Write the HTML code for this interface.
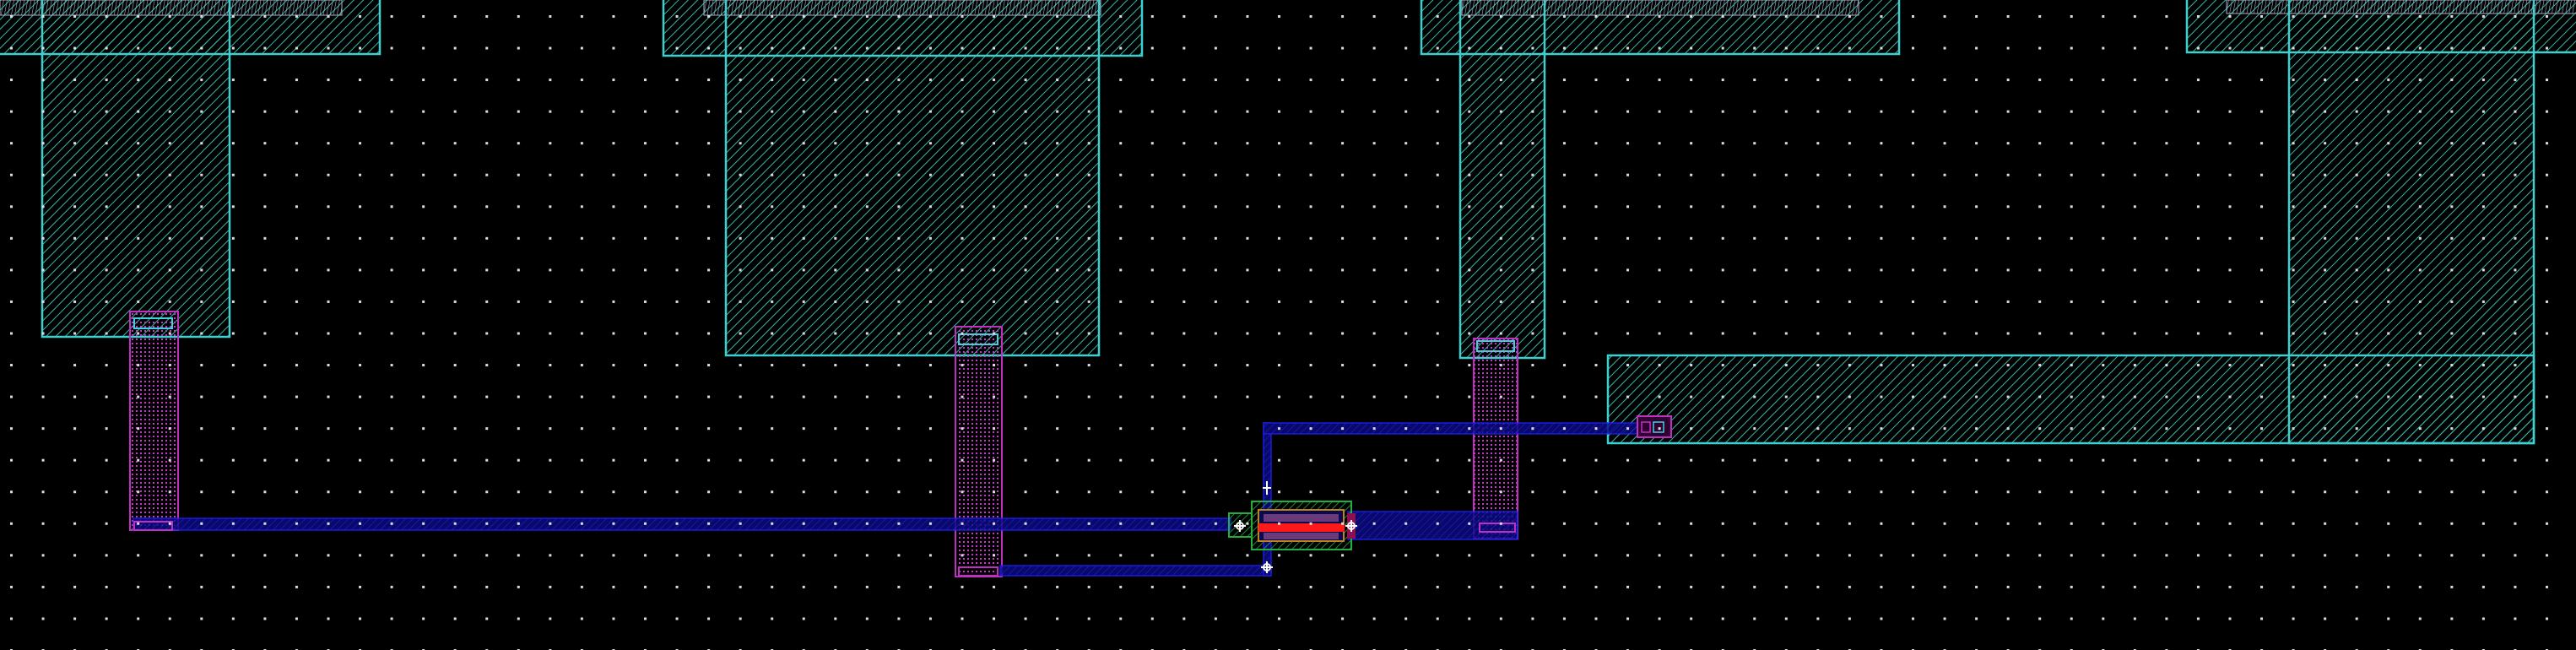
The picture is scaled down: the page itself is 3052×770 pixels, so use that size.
<!DOCTYPE html>
<html><head><style>html,body{margin:0;padding:0;background:#000;overflow:hidden}svg{display:block}</style></head>
<body>
<svg width="3052" height="770" viewBox="0 0 3052 770" xmlns="http://www.w3.org/2000/svg">
<defs>
<pattern id="dots" x="11" y="17" width="37.55" height="37.55" patternUnits="userSpaceOnUse">
<rect x="1" y="1" width="3" height="3" fill="#ddd"/>
</pattern>
<pattern id="hatch" width="8" height="8" patternUnits="userSpaceOnUse" patternTransform="rotate(45)">
<line x1="0" y1="0" x2="0" y2="8" stroke="#36b8a8" stroke-width="2"/>
</pattern>
<pattern id="vh" width="4" height="4" patternUnits="userSpaceOnUse" patternTransform="rotate(10)">
<line x1="0" y1="0" x2="0" y2="4" stroke="#a8b2cc" stroke-width="1.2"/>
</pattern>
<pattern id="mag" width="5" height="5" patternUnits="userSpaceOnUse">
<rect x="1" y="1" width="2" height="2" fill="#c838c8"/>
</pattern>
<pattern id="bh" width="6" height="6" patternUnits="userSpaceOnUse" patternTransform="rotate(45)">
<rect width="6" height="6" fill="#0a0a80"/>
<line x1="0" y1="0" x2="0" y2="6" stroke="#2020c0" stroke-width="1.8"/>
</pattern>
<pattern id="gh" width="6" height="6" patternUnits="userSpaceOnUse" patternTransform="rotate(45)">
<line x1="0" y1="0" x2="0" y2="6" stroke="#1f9a3a" stroke-width="1.8"/>
</pattern>
</defs>
<rect width="3052" height="770" fill="#000"/>

<g fill="url(#hatch)">
<rect x="0" y="0" width="450" height="64"/>
<rect x="50" y="0" width="222" height="399"/>
<rect x="786" y="0" width="567" height="66"/>
<rect x="860" y="0" width="442" height="421"/>
<rect x="1684" y="0" width="566" height="64"/>
<rect x="1730" y="0" width="100" height="424"/>
<rect x="2591" y="0" width="461" height="62"/>
<rect x="2712" y="0" width="290" height="525"/>
<rect x="1905" y="421" width="1097" height="104"/>
</g>
<g fill="url(#vh)">
<rect x="0" y="0" width="405" height="18"/>
<rect x="834" y="0" width="470" height="18"/>
<rect x="1732" y="0" width="470" height="18"/>
<rect x="2638" y="0" width="414" height="16"/>
</g>
<rect x="0" y="0" width="405" height="18" fill="none" stroke="#a8b0c8" stroke-width="1"/>
<rect x="834" y="0" width="470" height="18" fill="none" stroke="#a8b0c8" stroke-width="1"/>
<rect x="1732" y="0" width="470" height="18" fill="none" stroke="#a8b0c8" stroke-width="1"/>
<rect x="2638" y="0" width="420" height="16" fill="none" stroke="#a8b0c8" stroke-width="1"/>
<g fill="none" stroke="#3fcfcf" stroke-width="2.5">
<rect x="-5" y="-5" width="455" height="69"/>
<rect x="50" y="-5" width="222" height="404"/>
<rect x="786" y="-5" width="567" height="71"/>
<rect x="860" y="-5" width="442" height="426"/>
<rect x="1684" y="-5" width="566" height="69"/>
<rect x="1730" y="-5" width="100" height="429"/>
<rect x="2591" y="-5" width="470" height="67"/>
<rect x="2712" y="-5" width="290" height="530"/>
<rect x="1905" y="421" width="1097" height="104"/>
</g>

<g fill="url(#mag)" stroke="#c030c0" stroke-width="2">
<rect x="154" y="369" width="57" height="259"/>
<rect x="1132" y="387" width="55" height="296"/>
<rect x="1746" y="401" width="52" height="237"/>
</g>
<g fill="none" stroke="#40d0e0" stroke-width="2">
<rect x="159" y="377" width="45" height="12"/>
<rect x="1136" y="396" width="46" height="12"/>
<rect x="1750" y="404" width="44" height="12"/>
</g>

<g fill="url(#bh)" stroke="#2020ff" stroke-width="1.5" opacity="0.85">
<rect x="158" y="614" width="1300" height="14"/>
<rect x="1185" y="670" width="321" height="12"/>
<rect x="1497" y="501" width="9" height="181"/>
<rect x="1497" y="501" width="450" height="13"/>
<rect x="1597" y="606" width="201" height="33"/>
</g>
<rect x="159" y="618" width="45" height="10" fill="none" stroke="#c030c0" stroke-width="2"/>
<rect x="1136" y="672" width="46" height="10" fill="none" stroke="#c030c0" stroke-width="2"/>
<rect x="1753" y="620" width="42" height="10" fill="none" stroke="#c030c0" stroke-width="2"/>

<rect x="1940" y="493" width="40" height="25" fill="#300030" stroke="#c030c0" stroke-width="2"/>
<rect x="1945" y="500" width="10" height="12" fill="none" stroke="#c030c0" stroke-width="1.5"/>
<rect x="1959" y="500" width="12" height="12" fill="none" stroke="#40d0e0" stroke-width="1.5"/>

<rect x="1456" y="608" width="27" height="28" fill="url(#gh)" stroke="#20b040" stroke-width="2"/>
<rect x="1483" y="594" width="118" height="57" fill="url(#gh)" stroke="#20b040" stroke-width="2"/>
<rect x="1491" y="604" width="101" height="37" fill="#0a0a50" stroke="#c08020" stroke-width="2"/>
<rect x="1497" y="609" width="89" height="9" fill="#6a3a7a"/>
<rect x="1497" y="631" width="89" height="8" fill="#6a3a7a"/>
<rect x="1491" y="620" width="102" height="10" fill="#ff1a1a"/>
<rect x="1596" y="608" width="10" height="30" fill="#8a1050"/>
<g stroke="#fff" stroke-width="2" fill="none">
<circle cx="1469" cy="623" r="4"/><line x1="1462" y1="623" x2="1476" y2="623"/><line x1="1469" y1="616" x2="1469" y2="630"/>
<circle cx="1601" cy="623" r="4"/><line x1="1594" y1="623" x2="1608" y2="623"/><line x1="1601" y1="616" x2="1601" y2="630"/>
<circle cx="1501" cy="672" r="4"/><line x1="1494" y1="672" x2="1508" y2="672"/><line x1="1501" y1="665" x2="1501" y2="679"/>
<line x1="1496" y1="578" x2="1506" y2="578"/><line x1="1501" y1="570" x2="1501" y2="586"/>
</g>

<rect width="3052" height="770" fill="url(#dots)"/>
</svg>
</body></html>
